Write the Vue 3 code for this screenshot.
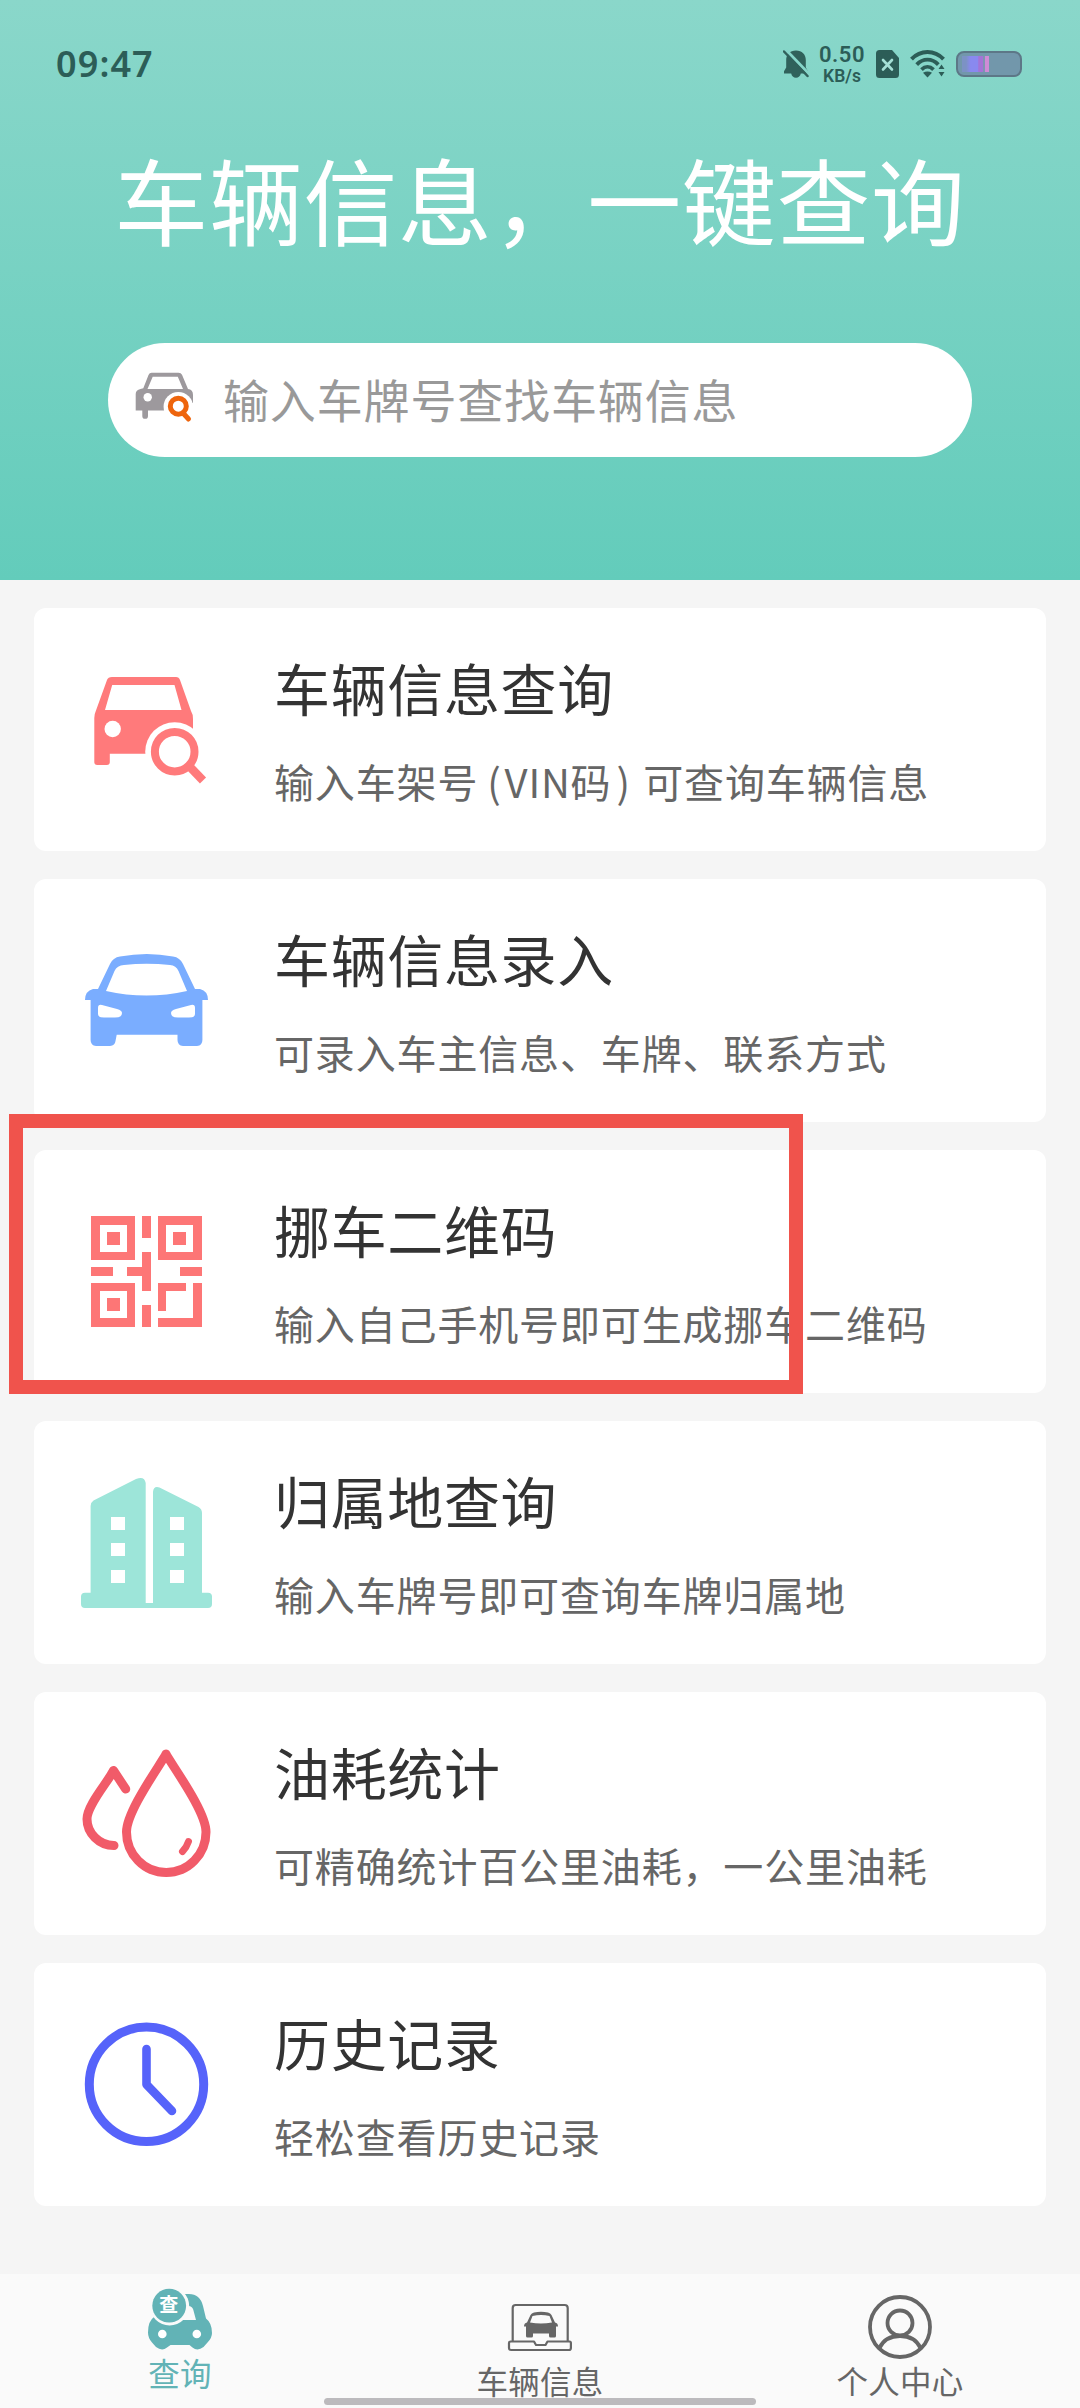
<script setup>
const features = [
  { icon: 'search', title: '车辆信息查询', before: '输入车架号', paren: 'VIN码', after: '可查询车辆信息' },
  { icon: 'car', title: '车辆信息录入', before: '可录入车主信息、车牌、联系方式' },
  { icon: 'qr', title: '挪车二维码', before: '输入自己手机号即可生成挪车二维码', marked: true },
  { icon: 'city', title: '归属地查询', before: '输入车牌号即可查询车牌归属地' },
  { icon: 'oil', title: '油耗统计', before: '可精确统计百公里油耗，一公里油耗' },
  { icon: 'clock', title: '历史记录', before: '轻松查看历史记录' },
]
</script>

<template>
  <div class="screen">
    <header class="hero">
      <div class="status">
        <span class="time">09:47</span>
        <div class="status-right">
          <svg class="bell" width="26" height="30" viewBox="0 0 26 30">
            <path d="M13 1.500C7 1.500 3.200 5.500 3.200 11v7.500L1 22.300V24.500h7.200c.4 2.600 2.300 4.200 4.800 4.200s4.400-1.600 4.800-4.200H25v-2.200l-2.200-3.800V11C22.800 5.500 19 1.500 13 1.500z" fill="#30615b" />
            <path d="M1.500-.5L28 27" stroke="#86d5c9" stroke-width="3" />
            <path d="M1 2.500L24.500 27" stroke="#30615b" stroke-width="2.500" stroke-linecap="round" />
          </svg>
          <div class="speed"><span class="num">0.50</span><span class="unit">KB/s</span></div>
          <svg class="sim" width="23" height="28" viewBox="0 0 23 28">
            <path d="M3.500 0H16l7 8v16.500a3.500 3.500 0 0 1-3.500 3.500h-16A3.500 3.500 0 0 1 0 24.500v-21A3.500 3.500 0 0 1 3.500 0z" fill="#2c5d57" />
            <path d="M7 10l9 9.500M16 10l-9 9.500" stroke="#a5e0d6" stroke-width="2.600" stroke-linecap="round" />
          </svg>
          <svg class="wifi" width="36" height="28" viewBox="0 0 36 28" fill="none" stroke="#2c5d57">
            <path d="M1.500 9.200C10.500-.3 24.500-.3 33.500 9.200" stroke-width="4" />
            <path d="M6.700 14.600C13 8 22 8 28.300 14.600" stroke-width="3.800" />
            <path d="M11.500 19.600c3.700-3.700 8.300-3.700 12 0" stroke-width="3.800" />
            <path d="M13 22.800q4.500-2.600 9 0L17.500 27.500z" fill="#2c5d57" stroke="none" />
            <path d="M28.500 19l3-4.500 3 4.500zM28.500 22l3 4.500 3-4.500z" fill="#2c5d57" stroke="none" />
          </svg>
          <div class="battery"><i class="charge"></i></div>
        </div>
      </div>
      <h1>车辆信息，一键查询</h1>
      <div class="searchbox">
        <svg width="60" height="54" viewBox="0 0 60 54">
          <path fill="#9d999d" fill-rule="evenodd" d="M17.500 2.700h27q2.500 0 3.500 2l6 14.300q5 .5 5 6V40.500H14V46a2.800 2.800 0 0 1-5.700 0v-5.500H1.700V24q0-4 4.800-5l2.800-.8L14.500 5q1-2.300 3-2.300zM18.700 6.700L13.500 19H49L43.800 6.700z" />
          <circle cx="13.700" cy="27.300" r="4.200" fill="#fff" />
          <path d="M44.300 36.700L62 54V32z" fill="#fff" />
          <circle cx="44.300" cy="36.700" r="14.700" fill="#fff" />
          <path d="M49 43l5.500 6" stroke="#ee650d" stroke-width="5" stroke-linecap="round" />
          <circle cx="44.300" cy="36.200" r="8" fill="none" stroke="#ee650d" stroke-width="5" />
        </svg>
        <span>输入车牌号查找车辆信息</span>
      </div>
    </header>

    <main class="list">
      <section v-for="f in features" :key="f.icon" class="card">
        <svg class="icon" width="140" height="140" viewBox="0 0 140 140">
          <template v-if="f.icon === 'search'">
            <path fill="#ff7a7b" fill-rule="evenodd" d="M36 17h64q3 0 4 3l11 31q2 3 2 8v34.700H33.800V102q0 3-3 3h-9.500q-3 0-3-3V58q0-4 1.500-7L31 20q1-3 5-3zM36.200 25L29 50h76.500L98.500 25z" />
            <circle cx="36.700" cy="69" r="8.200" fill="#fff" />
            <circle cx="98.700" cy="91.700" r="29.500" fill="#fff" />
            <path d="M114 107l13 13.500" stroke="#ff7a7b" stroke-width="8.500" />
            <circle cx="98.700" cy="91.700" r="19.800" fill="none" stroke="#ff7a7b" stroke-width="8" />
          </template>
          <template v-else-if="f.icon === 'car'">
            <path fill="#7aadff" fill-rule="evenodd" d="M22 58L34 33Q37 26.500 44 25.500Q71 20.500 97 25.500Q104 26.500 107 33L119 58H124Q132 60 132 69H126.400V109Q126.400 114.500 121 115H107Q101.500 114.500 101.500 109V103.700H40.700L39.500 110Q39 114.500 34 115H20Q14.600 114.500 14.600 109V69H9Q9 60 17 58zM30 60Q70.500 69 111 60L102.500 40Q100 34.500 94 34Q70.500 31.500 48 34Q41 34.500 38.500 40zM26 74Q22 73 22 77V83Q22 86.500 28 86.500H39Q46 86.500 46 82Q46 79.500 41 78zM115 74Q119 73 119 77V83Q119 86.500 113 86.500H102Q95 86.500 95 82Q95 79.500 100 78z" />
          </template>
          <g v-else-if="f.icon === 'qr'" fill="#fd7676" shape-rendering="crispEdges">
            <path fill-rule="evenodd" d="M15 14h44v44H15zM24 23v27h27V23zM31 30h13v13H31zM82 14h44v44H82zM90 23v27h27V23zM97 30h13v13H97zM15 81h44v44H15zM24 89v27h27V89zM31 96h13v13H31z" />
            <path d="M66 14h9v22h-9zM66 50h9v39h-9V74H51v-9h15zM66 103h9v22h-9zM15 65h22v9H15zM104 65h22v9h-22zM82 81h28v8H90v20h-8zM117 81h9v44H82v-9h35z" />
          </g>
          <path v-else-if="f.icon === 'city'" fill="#9de5d9" fill-rule="evenodd" d="M14.600 119.700V33Q14.600 29.500 17.500 27.500L60 6Q68.500 2.500 69.700 10V130H77V19Q77.500 12.500 83.500 14.500L122.500 34Q126 36 126 40V119.700H132Q136 119.700 136 123.500V131Q136 135 132 135H9Q5 135 5 131V123.500Q5 119.700 9 119.700zM35 44v13h14V44zM35 70v13h14V70zM35 97v13h14V97zM94 44v13h14V44zM94 70v13h14V70zM94 97v13h14V97z" />
          <g v-else-if="f.icon === 'oil'" fill="none" stroke="#f15b69" stroke-width="9" stroke-linecap="round" stroke-linejoin="round">
            <path d="M90 10C85 20 50.500 67 50.500 88A39.500 40.300 0 0 0 130 88C130 67 95 20 90 10z" />
            <path d="M49.700 45L37.500 26.500C32 38 11 61 11 75C11 89 23 101.500 38 101.500" />
            <path d="M112.500 97.500q-2 6-6 10" stroke-width="7" />
          </g>
          <g v-else fill="none" stroke="#5663fa" stroke-linecap="round" stroke-linejoin="round">
            <circle cx="70.500" cy="69.300" r="57.200" stroke-width="9" />
            <path d="M70.500 34v35.500l25.500 26.500" stroke-width="8.600" />
          </g>
        </svg>
        <div class="copy">
          <h2>{{ f.title }}</h2>
          <p>{{ f.before }}<span v-if="f.paren" class="paren"><b>(</b>{{ f.paren }}<b class="close">)</b></span>{{ f.after }}</p>
        </div>
        <div v-if="f.marked" class="marker"></div>
      </section>
    </main>

    <nav class="tabs">
      <div class="tab active">
        <div class="tab-icon">
          <svg width="68" height="64" viewBox="0 0 68 64">
            <path fill="#62b3b6" fill-rule="evenodd" d="M38 7h5q11 0 14 12l3 12.500q6 4.500 6 14.500q0 5-4.500 9.500l-4 4.500q-6 4.500-11 .5L43.500 58H24.500L21 60.500q-5 4-11-.5l-4-4.500Q2 51 2 45.500Q2 34 8 30L14 18zM36 33h14l-2.800-10.500Q46 19 42.500 19H36z" />
            <circle cx="23.600" cy="19" r="19.600" fill="#fafafa" />
            <circle cx="23.200" cy="18.700" r="16.900" fill="#62b3b6" />
            <circle cx="16.300" cy="47" r="4.300" fill="#fff" /><circle cx="50.800" cy="47" r="4.300" fill="#fff" />
          </svg>
          <em>查</em>
        </div>
        <span>查询</span>
      </div>
      <div class="tab">
        <svg width="68" height="50" viewBox="0 0 68 50" fill="none" stroke="#666" stroke-width="2.200" stroke-linejoin="round">
          <path d="M6.700 39.500V6q0-3 3-3h49q3 0 3 3v33.500" />
          <path d="M4.500 39.500H28l2 3.500h9.500l2-3.500H63.500q1.400 0 1.400 1.500v5q0 2-2 2H5q-2 0-2-2v-5q0-1.500 1.500-1.500z" />
          <path fill="#666" stroke="none" fill-rule="evenodd" d="M21 20.500L24.500 13q1-2 3.500-2.500q7-1.500 14 0q2.500.5 3.500 2.500L49 20.500q3 .5 3 4h-2V34q0 1.500-1.500 1.500h-4Q43 35.500 43 34v-2.500H27V34q0 1.500-1.500 1.500h-4Q20 35.500 20 34v-9.500h-2q0-3.500 3-4zM24 20.500q11 2 22 0L43.500 14q-8.500-2-17 0z" />
        </svg>
        <span>车辆信息</span>
      </div>
      <div class="tab">
        <svg width="66" height="66" viewBox="0 0 66 66" fill="none" stroke="#666" stroke-width="3.800">
          <circle cx="33" cy="33" r="30" />
          <circle cx="33" cy="29" r="12.500" />
          <path d="M12.500 54C16 46.500 23.500 42 33 42S50 46.500 53.500 54" />
        </svg>
        <span>个人中心</span>
      </div>
      <div class="home"></div>
    </nav>
  </div>
</template>

<style>
body { margin: 0; background: #f5f5f5; }
</style>

<style scoped>
.screen { width: 1080px; height: 2408px; display: flex; flex-direction: column; background: #f5f5f5; overflow: hidden; font-family: "Noto Sans CJK SC", sans-serif; }
h1, h2, p { margin: 0; font-weight: 400; }
.hero { height: 580px; flex: none; background: linear-gradient(#8ad7ca, #63ccbb); display: flex; flex-direction: column; align-items: center; }
.status { width: 100%; height: 130px; box-sizing: border-box; padding: 40px 58px 0 56px; display: flex; justify-content: space-between; color: #2c5d57; font-family: "Noto Sans", sans-serif; }
.time { font-size: 36px; line-height: 48px; font-weight: 600; letter-spacing: 1.100px; }
.status-right { display: flex; height: 48px; align-items: center; }
.speed { display: flex; flex-direction: column; align-items: center; width: 46px; margin: 1px 11px 0 10px; font-weight: 600; font-family: Roboto, "Noto Sans", sans-serif; }
.num { font-size: 22px; line-height: 22px; letter-spacing: .500px; }
.unit { font-size: 17.500px; line-height: 20px; }
.wifi { margin: 0 10px 0 11px; }
.battery { width: 66px; height: 26px; box-sizing: border-box; border: 2.500px solid #5d7787; border-radius: 8px; background: #7297ab; padding: 3px 4px; }
.charge { display: block; width: 27px; height: 100%; background: linear-gradient(90deg, #7c92c4 0 15%, #8989ef 32% 58%, #a374d6 62% 78%, #7e94b3 79% 85%, #cf8bd6 86%); }
h1 { color: #fff; font-size: 94px; line-height: 136px; letter-spacing: .600px; white-space: nowrap; }
.searchbox { width: 864px; height: 114px; box-sizing: border-box; margin-top: 77px; padding-left: 26px; border-radius: 57px; background: #fff; display: flex; align-items: center; color: #999; font-size: 46px; letter-spacing: .850px; }
.searchbox svg { margin-right: 29px; margin-top: -6px; }
.searchbox span { margin-top: -4px; }
.list { flex: none; height: 1694px; box-sizing: border-box; padding: 28px 34px 0; display: flex; flex-direction: column; gap: 28px; }
.card { position: relative; height: 243px; flex: none; box-sizing: border-box; padding: 52px 0 0 42px; background: #fff; border-radius: 12px; display: flex; }
.icon { flex: none; margin-right: 58px; }
.copy { white-space: nowrap; margin-top: -13px; }
h2 { font-size: 56px; line-height: 80px; letter-spacing: .650px; color: #333; }
p { font-size: 40px; line-height: 60px; letter-spacing: .850px; margin-top: 24px; color: #666; }
.paren { display: inline-block; width: 165px; letter-spacing: .800px; }
.paren b { font-weight: 400; margin: 0 3px 0 9px; }
.paren .close { margin: 0 0 0 5px; }
.marker { position: absolute; left: -25px; top: -36px; width: 794px; height: 280px; box-sizing: border-box; border: 14px solid #f0534c; z-index: 2; }
.tabs { position: relative; height: 134px; flex: none; display: flex; background: #fafafa; color: #666; }
.tab { flex: 1; display: flex; flex-direction: column; align-items: center; font-size: 31.500px; line-height: 40px; letter-spacing: .300px; }
.tab > span { margin-top: auto; margin-bottom: 8px; }
.tab svg { display: block; }
.tab > svg { margin-top: 28px; }
.tab:nth-child(3) > svg { margin-top: 20px; }
.active { color: #62b3b6; }
.active > span { margin-bottom: 16px; }
.tab-icon { position: relative; margin-top: 13px; }
.tab-icon em { position: absolute; left: 13px; top: 5px; width: 20px; text-align: center; font-style: normal; font-size: 19px; line-height: 24px; font-weight: 700; color: #fff; }
.home { position: absolute; left: 324px; bottom: 3px; width: 432px; height: 7px; border-radius: 4px; background: #bcbabd; }
</style>
